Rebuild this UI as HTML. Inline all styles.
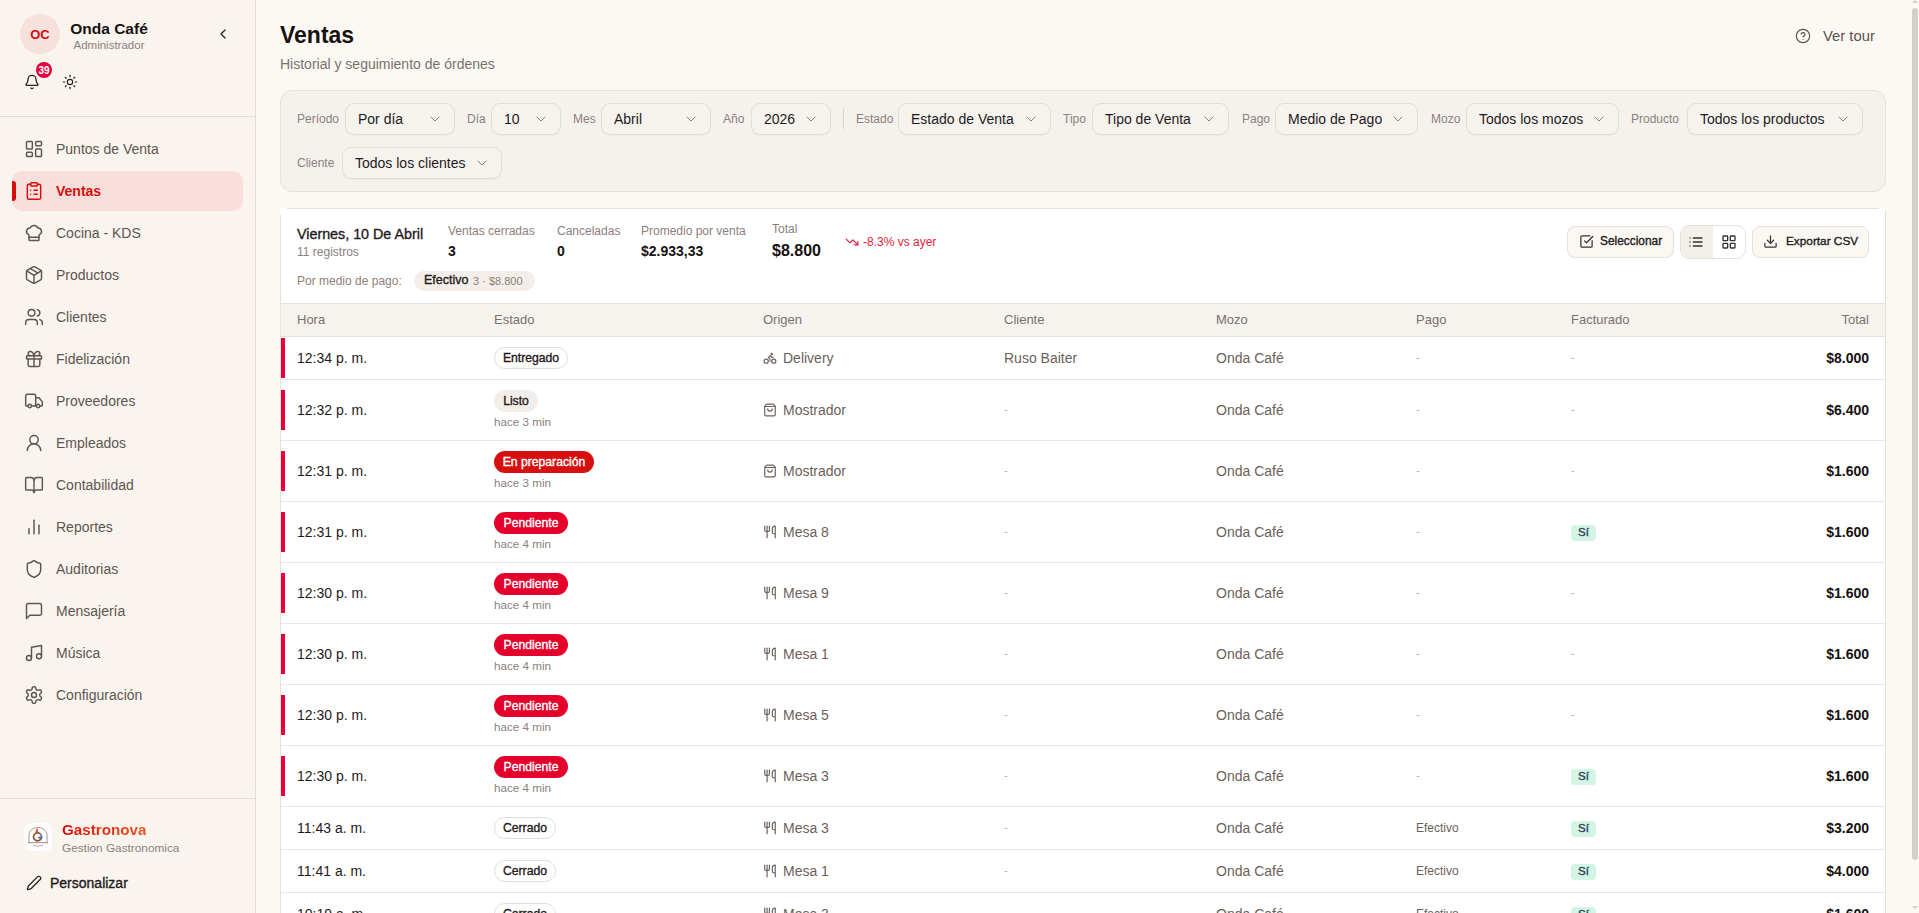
<!DOCTYPE html>
<html><head><meta charset="utf-8"><style>
html,body{margin:0;padding:0;width:1919px;height:913px;overflow:hidden;background:#fcf9f5;font-family:"Liberation Sans", sans-serif}
.t{position:absolute;white-space:nowrap;font-family:"Liberation Sans", sans-serif}
svg{display:block}
</style></head><body>
<div style="position:absolute;left:0px;top:0px;width:255px;height:913px;background:#f9f4ee"></div><div style="position:absolute;left:255px;top:0px;width:1px;height:913px;background:#e2ddd6"></div><div style="position:absolute;left:20px;top:14px;width:40px;height:40px;background:#f6e1dd;border-radius:50%"></div><div class="t" style="left:20px;top:28px;font-size:13px;line-height:13px;color:#d40b0b;font-weight:bold;width:40px;text-align:center">OC</div><div class="t" style="left:60px;top:21px;font-size:15.5px;line-height:15.5px;color:#17110f;font-weight:bold;width:98px;text-align:center">Onda Café</div><div class="t" style="left:60px;top:40px;font-size:11.5px;line-height:11.5px;color:#8b807b;font-weight:normal;width:98px;text-align:center">Administrador</div><svg style="position:absolute;left:215px;top:26px" width="16" height="16" viewBox="0 0 24 24" fill="none" stroke="#2a2224" stroke-width="2" stroke-linecap="round" stroke-linejoin="round"><path d="m15 18-6-6 6-6"/></svg><svg style="position:absolute;left:24px;top:74px" width="16" height="16" viewBox="0 0 24 24" fill="none" stroke="#2a2224" stroke-width="2" stroke-linecap="round" stroke-linejoin="round"><path d="M10.268 21a2 2 0 0 0 3.464 0"/><path d="M3.262 15.326A1 1 0 0 0 4 17h16a1 1 0 0 0 .74-1.673C19.41 13.956 18 12.499 18 8A6 6 0 0 0 6 8c0 4.499-1.411 5.956-2.738 7.326"/></svg><div style="position:absolute;left:36px;top:62px;width:16px;height:16px;background:#e8003d;border-radius:50%"></div><div class="t" style="left:36px;top:66px;font-size:10px;line-height:10px;color:#ffffff;font-weight:bold;width:16px;text-align:center">39</div><svg style="position:absolute;left:62px;top:74px" width="16" height="16" viewBox="0 0 24 24" fill="none" stroke="#2a2224" stroke-width="1.8" stroke-linecap="round" stroke-linejoin="round"><circle cx="12" cy="12" r="4"/><path d="M12 2v2"/><path d="M12 20v2"/><path d="m4.93 4.93 1.41 1.41"/><path d="m17.66 17.66 1.41 1.41"/><path d="M2 12h2"/><path d="M20 12h2"/><path d="m6.34 17.66-1.41 1.41"/><path d="m19.07 4.93-1.41 1.41"/></svg><div style="position:absolute;left:0px;top:116px;width:255px;height:1px;background:#e2ddd6"></div><svg style="position:absolute;left:24px;top:139px" width="20" height="20" viewBox="0 0 24 24" fill="none" stroke="#5f5450" stroke-width="1.75" stroke-linecap="round" stroke-linejoin="round"><rect width="7" height="9" x="3" y="3" rx="1"/><rect width="7" height="5" x="14" y="3" rx="1"/><rect width="7" height="9" x="14" y="12" rx="1"/><rect width="7" height="5" x="3" y="16" rx="1"/></svg><div class="t" style="left:56px;top:142px;font-size:14px;line-height:14px;color:#5f5450;font-weight:normal;">Puntos de Venta</div><div style="position:absolute;left:12px;top:171px;width:231px;height:40px;background:#f9dfdb;border-radius:10px"></div><div style="position:absolute;left:12px;top:181px;width:4px;height:20px;background:#d50d0d;border-radius:0 3px 3px 0"></div><svg style="position:absolute;left:24px;top:181px" width="20" height="20" viewBox="0 0 24 24" fill="none" stroke="#d50d0d" stroke-width="1.75" stroke-linecap="round" stroke-linejoin="round"><rect width="8" height="4" x="8" y="2" rx="1" ry="1"/><path d="M16 4h2a2 2 0 0 1 2 2v14a2 2 0 0 1-2 2H6a2 2 0 0 1-2-2V6a2 2 0 0 1 2-2h2"/><path d="M12 11h4"/><path d="M12 16h4"/><path d="M8 11h.01"/><path d="M8 16h.01"/></svg><div class="t" style="left:56px;top:184px;font-size:14px;line-height:14px;color:#d50d0d;font-weight:bold;">Ventas</div><svg style="position:absolute;left:24px;top:223px" width="20" height="20" viewBox="0 0 24 24" fill="none" stroke="#5f5450" stroke-width="1.75" stroke-linecap="round" stroke-linejoin="round"><path d="M17 21a1 1 0 0 0 1-1v-5.35c0-.457.316-.844.727-1.041a4 4 0 0 0-2.134-7.589 5 5 0 0 0-9.186 0 4 4 0 0 0-2.134 7.588c.411.198.727.585.727 1.041V20a1 1 0 0 0 1 1Z"/><path d="M6 17h12"/></svg><div class="t" style="left:56px;top:226px;font-size:14px;line-height:14px;color:#5f5450;font-weight:normal;">Cocina - KDS</div><svg style="position:absolute;left:24px;top:265px" width="20" height="20" viewBox="0 0 24 24" fill="none" stroke="#5f5450" stroke-width="1.75" stroke-linecap="round" stroke-linejoin="round"><path d="M11 21.73a2 2 0 0 0 2 0l7-4A2 2 0 0 0 21 16V8a2 2 0 0 0-1-1.73l-7-4a2 2 0 0 0-2 0l-7 4A2 2 0 0 0 3 8v8a2 2 0 0 0 1 1.73z"/><path d="M12 22V12"/><path d="m3.3 7 7.703 4.734a2 2 0 0 0 1.994 0L20.7 7"/><path d="m7.5 4.27 9 5.15"/></svg><div class="t" style="left:56px;top:268px;font-size:14px;line-height:14px;color:#5f5450;font-weight:normal;">Productos</div><svg style="position:absolute;left:24px;top:307px" width="20" height="20" viewBox="0 0 24 24" fill="none" stroke="#5f5450" stroke-width="1.75" stroke-linecap="round" stroke-linejoin="round"><path d="M16 21v-2a4 4 0 0 0-4-4H6a4 4 0 0 0-4 4v2"/><circle cx="9" cy="7" r="4"/><path d="M22 21v-2a4 4 0 0 0-3-3.87"/><path d="M16 3.13a4 4 0 0 1 0 7.75"/></svg><div class="t" style="left:56px;top:310px;font-size:14px;line-height:14px;color:#5f5450;font-weight:normal;">Clientes</div><svg style="position:absolute;left:24px;top:349px" width="20" height="20" viewBox="0 0 24 24" fill="none" stroke="#5f5450" stroke-width="1.75" stroke-linecap="round" stroke-linejoin="round"><rect x="3" y="8" width="18" height="4" rx="1"/><path d="M12 8v13"/><path d="M19 12v7a2 2 0 0 1-2 2H7a2 2 0 0 1-2-2v-7"/><path d="M7.5 8a2.5 2.5 0 0 1 0-5A4.8 8 0 0 1 12 8a4.8 8 0 0 1 4.5-5 2.5 2.5 0 0 1 0 5"/></svg><div class="t" style="left:56px;top:352px;font-size:14px;line-height:14px;color:#5f5450;font-weight:normal;">Fidelización</div><svg style="position:absolute;left:24px;top:391px" width="20" height="20" viewBox="0 0 24 24" fill="none" stroke="#5f5450" stroke-width="1.75" stroke-linecap="round" stroke-linejoin="round"><path d="M14 18V6a2 2 0 0 0-2-2H4a2 2 0 0 0-2 2v11a1 1 0 0 0 1 1h2"/><path d="M15 18H9"/><path d="M19 18h2a1 1 0 0 0 1-1v-3.65a1 1 0 0 0-.22-.624l-3.48-4.35A1 1 0 0 0 17.52 8H14"/><circle cx="17" cy="18" r="2"/><circle cx="7" cy="18" r="2"/></svg><div class="t" style="left:56px;top:394px;font-size:14px;line-height:14px;color:#5f5450;font-weight:normal;">Proveedores</div><svg style="position:absolute;left:24px;top:433px" width="20" height="20" viewBox="0 0 24 24" fill="none" stroke="#5f5450" stroke-width="1.75" stroke-linecap="round" stroke-linejoin="round"><circle cx="12" cy="8" r="5"/><path d="M20 21a8 8 0 0 0-16 0"/></svg><div class="t" style="left:56px;top:436px;font-size:14px;line-height:14px;color:#5f5450;font-weight:normal;">Empleados</div><svg style="position:absolute;left:24px;top:475px" width="20" height="20" viewBox="0 0 24 24" fill="none" stroke="#5f5450" stroke-width="1.75" stroke-linecap="round" stroke-linejoin="round"><path d="M12 7v14"/><path d="M3 18a1 1 0 0 1-1-1V4a1 1 0 0 1 1-1h5a4 4 0 0 1 4 4 4 4 0 0 1 4-4h5a1 1 0 0 1 1 1v13a1 1 0 0 1-1 1h-6a3 3 0 0 0-3 3 3 3 0 0 0-3-3z"/></svg><div class="t" style="left:56px;top:478px;font-size:14px;line-height:14px;color:#5f5450;font-weight:normal;">Contabilidad</div><svg style="position:absolute;left:24px;top:517px" width="20" height="20" viewBox="0 0 24 24" fill="none" stroke="#5f5450" stroke-width="1.75" stroke-linecap="round" stroke-linejoin="round"><line x1="18" x2="18" y1="20" y2="10"/><line x1="12" x2="12" y1="20" y2="4"/><line x1="6" x2="6" y1="20" y2="14"/></svg><div class="t" style="left:56px;top:520px;font-size:14px;line-height:14px;color:#5f5450;font-weight:normal;">Reportes</div><svg style="position:absolute;left:24px;top:559px" width="20" height="20" viewBox="0 0 24 24" fill="none" stroke="#5f5450" stroke-width="1.75" stroke-linecap="round" stroke-linejoin="round"><path d="M20 13c0 5-3.5 7.5-7.66 8.95a1 1 0 0 1-.67-.01C7.5 20.5 4 18 4 13V6a1 1 0 0 1 1-1c2 0 4.5-1.2 6.24-2.72a1.17 1.17 0 0 1 1.52 0C14.51 3.81 17 5 19 5a1 1 0 0 1 1 1z"/></svg><div class="t" style="left:56px;top:562px;font-size:14px;line-height:14px;color:#5f5450;font-weight:normal;">Auditorias</div><svg style="position:absolute;left:24px;top:601px" width="20" height="20" viewBox="0 0 24 24" fill="none" stroke="#5f5450" stroke-width="1.75" stroke-linecap="round" stroke-linejoin="round"><path d="M21 15a2 2 0 0 1-2 2H7l-4 4V5a2 2 0 0 1 2-2h14a2 2 0 0 1 2 2z"/></svg><div class="t" style="left:56px;top:604px;font-size:14px;line-height:14px;color:#5f5450;font-weight:normal;">Mensajería</div><svg style="position:absolute;left:24px;top:643px" width="20" height="20" viewBox="0 0 24 24" fill="none" stroke="#5f5450" stroke-width="1.75" stroke-linecap="round" stroke-linejoin="round"><path d="M9 18V5l12-2v13"/><circle cx="6" cy="18" r="3"/><circle cx="18" cy="16" r="3"/></svg><div class="t" style="left:56px;top:646px;font-size:14px;line-height:14px;color:#5f5450;font-weight:normal;">Música</div><svg style="position:absolute;left:24px;top:685px" width="20" height="20" viewBox="0 0 24 24" fill="none" stroke="#5f5450" stroke-width="1.75" stroke-linecap="round" stroke-linejoin="round"><path d="M12.22 2h-.44a2 2 0 0 0-2 2v.18a2 2 0 0 1-1 1.73l-.43.25a2 2 0 0 1-2 0l-.15-.08a2 2 0 0 0-2.73.73l-.22.38a2 2 0 0 0 .73 2.73l.15.1a2 2 0 0 1 1 1.72v.51a2 2 0 0 1-1 1.74l-.15.09a2 2 0 0 0-.73 2.73l.22.38a2 2 0 0 0 2.73.73l.15-.08a2 2 0 0 1 2 0l.43.25a2 2 0 0 1 1 1.73V20a2 2 0 0 0 2 2h.44a2 2 0 0 0 2-2v-.18a2 2 0 0 1 1-1.73l.43-.25a2 2 0 0 1 2 0l.15.08a2 2 0 0 0 2.73-.73l.22-.39a2 2 0 0 0-.73-2.73l-.15-.08a2 2 0 0 1-1-1.74v-.5a2 2 0 0 1 1-1.74l.15-.09a2 2 0 0 0 .73-2.73l-.22-.38a2 2 0 0 0-2.73-.73l-.15.08a2 2 0 0 1-2 0l-.43-.25a2 2 0 0 1-1-1.73V4a2 2 0 0 0-2-2z"/><circle cx="12" cy="12" r="3"/></svg><div class="t" style="left:56px;top:688px;font-size:14px;line-height:14px;color:#5f5450;font-weight:normal;">Configuración</div><div style="position:absolute;left:0px;top:798px;width:255px;height:1px;background:#e2ddd6"></div><div style="position:absolute;left:24px;top:823px;width:28px;height:28px;background:#fefdfc;border-radius:7px;box-shadow:0 0 1px rgba(255,255,255,0.8)"></div><svg style="position:absolute;left:24px;top:823px" width="28" height="28" viewBox="0 0 28 28"><path d="M5 20 V12 A9 7.5 0 0 1 23 12 V20" fill="none" stroke="#9a8e89" stroke-width="0.9"/><path d="M13.2 5 C11.5 7.5 11 9.5 12.2 11.2 C13.5 9.8 14.8 8.2 13.2 5 Z" fill="#e4472a"/><path d="M16.8 11.5 A4 4 0 1 0 17.5 14.5 H14.5" fill="none" stroke="#8f5534" stroke-width="1.7"/><path d="M16.8 11.5 A4 4 0 0 1 17.5 14.5 H14.5" fill="none" stroke="#3f79c4" stroke-width="1.7"/><path d="M4 19.6 H24" stroke="#948c98" stroke-width="1.1" stroke-dasharray="2.2 0.5"/><path d="M9 22.3 Q14 24 19 22.3" fill="none" stroke="#a39791" stroke-width="0.8"/></svg><div class="t" style="left:62px;top:822px;font-size:15.2px;line-height:15.2px;color:#e0180c;font-weight:bold;background:linear-gradient(90deg,#dd0a0a,#e8561e);-webkit-background-clip:text;background-clip:text;color:transparent">Gastronova</div><div class="t" style="left:62px;top:843px;font-size:11.8px;line-height:11.8px;color:#8b807b;font-weight:normal;">Gestion Gastronomica</div><svg style="position:absolute;left:26px;top:875px" width="16" height="16" viewBox="0 0 24 24" fill="none" stroke="#2a2224" stroke-width="2" stroke-linecap="round" stroke-linejoin="round"><path d="M21.174 6.812a1 1 0 0 0-3.986-3.987L3.842 16.174a2 2 0 0 0-.5.83l-1.321 4.352a.5.5 0 0 0 .623.622l4.353-1.32a2 2 0 0 0 .83-.497z"/></svg><div class="t" style="left:50px;top:876px;font-size:14px;line-height:14px;color:#231b1d;font-weight:normal;-webkit-text-stroke:0.35px #231b1d;">Personalizar</div><div style="position:absolute;left:256px;top:0px;width:1663px;height:913px;background:#fcf9f5"></div><div class="t" style="left:280px;top:24px;font-size:23px;line-height:23px;color:#17110f;font-weight:bold;">Ventas</div><div class="t" style="left:280px;top:57px;font-size:14px;line-height:14px;color:#7b706b;font-weight:normal;">Historial y seguimiento de órdenes</div><svg style="position:absolute;left:1795px;top:28px" width="16" height="16" viewBox="0 0 24 24" fill="none" stroke="#5d5150" stroke-width="1.75" stroke-linecap="round" stroke-linejoin="round"><circle cx="12" cy="12" r="10"/><path d="M9.09 9a3 3 0 0 1 5.83 1c0 2-3 3-3 3"/><path d="M12 17h.01"/></svg><div class="t" style="left:1823px;top:29px;font-size:14.8px;line-height:14.8px;color:#5d5150;font-weight:normal;">Ver tour</div><div style="position:absolute;left:280px;top:90px;width:1604px;height:100px;background:#f5f2ee;border:1px solid #e6e1db;border-radius:12px"></div><div class="t" style="left:297px;top:113px;font-size:12px;line-height:12px;color:#8b807b;font-weight:normal;">Período</div><div style="position:absolute;left:345px;top:103px;width:108px;height:30px;background:#f6f3ef;border:1px solid #e3ddd7;border-radius:9px;box-shadow:0 1px 1px rgba(0,0,0,0.03)"></div><div class="t" style="left:358px;top:112px;font-size:14px;line-height:14px;color:#1f1a1c;font-weight:normal;">Por día</div><svg style="position:absolute;left:427px;top:111px" width="16" height="16" viewBox="0 0 24 24" fill="none" stroke="#8b807b" stroke-width="1.5" stroke-linecap="round" stroke-linejoin="round"><path d="m6 9 6 6 6-6"/></svg><div class="t" style="left:467px;top:113px;font-size:12px;line-height:12px;color:#8b807b;font-weight:normal;">Día</div><div style="position:absolute;left:491px;top:103px;width:68px;height:30px;background:#f6f3ef;border:1px solid #e3ddd7;border-radius:9px;box-shadow:0 1px 1px rgba(0,0,0,0.03)"></div><div class="t" style="left:504px;top:112px;font-size:14px;line-height:14px;color:#1f1a1c;font-weight:normal;">10</div><svg style="position:absolute;left:533px;top:111px" width="16" height="16" viewBox="0 0 24 24" fill="none" stroke="#8b807b" stroke-width="1.5" stroke-linecap="round" stroke-linejoin="round"><path d="m6 9 6 6 6-6"/></svg><div class="t" style="left:573px;top:113px;font-size:12px;line-height:12px;color:#8b807b;font-weight:normal;">Mes</div><div style="position:absolute;left:601px;top:103px;width:108px;height:30px;background:#f6f3ef;border:1px solid #e3ddd7;border-radius:9px;box-shadow:0 1px 1px rgba(0,0,0,0.03)"></div><div class="t" style="left:614px;top:112px;font-size:14px;line-height:14px;color:#1f1a1c;font-weight:normal;">Abril</div><svg style="position:absolute;left:683px;top:111px" width="16" height="16" viewBox="0 0 24 24" fill="none" stroke="#8b807b" stroke-width="1.5" stroke-linecap="round" stroke-linejoin="round"><path d="m6 9 6 6 6-6"/></svg><div class="t" style="left:723px;top:113px;font-size:12px;line-height:12px;color:#8b807b;font-weight:normal;">Año</div><div style="position:absolute;left:751px;top:103px;width:78px;height:30px;background:#f6f3ef;border:1px solid #e3ddd7;border-radius:9px;box-shadow:0 1px 1px rgba(0,0,0,0.03)"></div><div class="t" style="left:764px;top:112px;font-size:14px;line-height:14px;color:#1f1a1c;font-weight:normal;">2026</div><svg style="position:absolute;left:803px;top:111px" width="16" height="16" viewBox="0 0 24 24" fill="none" stroke="#8b807b" stroke-width="1.5" stroke-linecap="round" stroke-linejoin="round"><path d="m6 9 6 6 6-6"/></svg><div style="position:absolute;left:843px;top:109px;width:1px;height:20px;background:#dcd5ce"></div><div class="t" style="left:856px;top:113px;font-size:12px;line-height:12px;color:#8b807b;font-weight:normal;">Estado</div><div style="position:absolute;left:898px;top:103px;width:151px;height:30px;background:#f6f3ef;border:1px solid #e3ddd7;border-radius:9px;box-shadow:0 1px 1px rgba(0,0,0,0.03)"></div><div class="t" style="left:911px;top:112px;font-size:14px;line-height:14px;color:#1f1a1c;font-weight:normal;">Estado de Venta</div><svg style="position:absolute;left:1023px;top:111px" width="16" height="16" viewBox="0 0 24 24" fill="none" stroke="#8b807b" stroke-width="1.5" stroke-linecap="round" stroke-linejoin="round"><path d="m6 9 6 6 6-6"/></svg><div class="t" style="left:1063px;top:113px;font-size:12px;line-height:12px;color:#8b807b;font-weight:normal;">Tipo</div><div style="position:absolute;left:1092px;top:103px;width:135px;height:30px;background:#f6f3ef;border:1px solid #e3ddd7;border-radius:9px;box-shadow:0 1px 1px rgba(0,0,0,0.03)"></div><div class="t" style="left:1105px;top:112px;font-size:14px;line-height:14px;color:#1f1a1c;font-weight:normal;">Tipo de Venta</div><svg style="position:absolute;left:1201px;top:111px" width="16" height="16" viewBox="0 0 24 24" fill="none" stroke="#8b807b" stroke-width="1.5" stroke-linecap="round" stroke-linejoin="round"><path d="m6 9 6 6 6-6"/></svg><div class="t" style="left:1242px;top:113px;font-size:12px;line-height:12px;color:#8b807b;font-weight:normal;">Pago</div><div style="position:absolute;left:1275px;top:103px;width:141px;height:30px;background:#f6f3ef;border:1px solid #e3ddd7;border-radius:9px;box-shadow:0 1px 1px rgba(0,0,0,0.03)"></div><div class="t" style="left:1288px;top:112px;font-size:14px;line-height:14px;color:#1f1a1c;font-weight:normal;">Medio de Pago</div><svg style="position:absolute;left:1390px;top:111px" width="16" height="16" viewBox="0 0 24 24" fill="none" stroke="#8b807b" stroke-width="1.5" stroke-linecap="round" stroke-linejoin="round"><path d="m6 9 6 6 6-6"/></svg><div class="t" style="left:1431px;top:113px;font-size:12px;line-height:12px;color:#8b807b;font-weight:normal;">Mozo</div><div style="position:absolute;left:1466px;top:103px;width:151px;height:30px;background:#f6f3ef;border:1px solid #e3ddd7;border-radius:9px;box-shadow:0 1px 1px rgba(0,0,0,0.03)"></div><div class="t" style="left:1479px;top:112px;font-size:14px;line-height:14px;color:#1f1a1c;font-weight:normal;">Todos los mozos</div><svg style="position:absolute;left:1591px;top:111px" width="16" height="16" viewBox="0 0 24 24" fill="none" stroke="#8b807b" stroke-width="1.5" stroke-linecap="round" stroke-linejoin="round"><path d="m6 9 6 6 6-6"/></svg><div class="t" style="left:1631px;top:113px;font-size:12px;line-height:12px;color:#8b807b;font-weight:normal;">Producto</div><div style="position:absolute;left:1687px;top:103px;width:174px;height:30px;background:#f6f3ef;border:1px solid #e3ddd7;border-radius:9px;box-shadow:0 1px 1px rgba(0,0,0,0.03)"></div><div class="t" style="left:1700px;top:112px;font-size:14px;line-height:14px;color:#1f1a1c;font-weight:normal;">Todos los productos</div><svg style="position:absolute;left:1835px;top:111px" width="16" height="16" viewBox="0 0 24 24" fill="none" stroke="#8b807b" stroke-width="1.5" stroke-linecap="round" stroke-linejoin="round"><path d="m6 9 6 6 6-6"/></svg><div class="t" style="left:297px;top:157px;font-size:12px;line-height:12px;color:#8b807b;font-weight:normal;">Cliente</div><div style="position:absolute;left:342px;top:147px;width:158px;height:30px;background:#f6f3ef;border:1px solid #e3ddd7;border-radius:9px;box-shadow:0 1px 1px rgba(0,0,0,0.03)"></div><div class="t" style="left:355px;top:156px;font-size:14px;line-height:14px;color:#1f1a1c;font-weight:normal;">Todos los clientes</div><svg style="position:absolute;left:474px;top:155px" width="16" height="16" viewBox="0 0 24 24" fill="none" stroke="#8b807b" stroke-width="1.5" stroke-linecap="round" stroke-linejoin="round"><path d="m6 9 6 6 6-6"/></svg><div style="position:absolute;left:280px;top:208px;width:1604px;height:720px;background:#ffffff;border:1px solid #e6e1db"></div><div style="position:absolute;left:280px;top:208px;width:7px;height:7px;background:#ffffff"></div><div style="position:absolute;left:1879px;top:208px;width:7px;height:2px;background:#ffffff"></div><div class="t" style="left:297px;top:227px;font-size:14.3px;line-height:14.3px;color:#1f1a1c;font-weight:normal;-webkit-text-stroke:0.35px #1f1a1c;">Viernes, 10 De Abril</div><div class="t" style="left:297px;top:246px;font-size:12px;line-height:12px;color:#8b807b;font-weight:normal;">11 registros</div><div class="t" style="left:448px;top:225px;font-size:12px;line-height:12px;color:#8b807b;font-weight:normal;">Ventas cerradas</div><div class="t" style="left:448px;top:244px;font-size:14px;line-height:14px;color:#17110f;font-weight:bold;">3</div><div class="t" style="left:557px;top:225px;font-size:12px;line-height:12px;color:#8b807b;font-weight:normal;">Canceladas</div><div class="t" style="left:557px;top:244px;font-size:14px;line-height:14px;color:#17110f;font-weight:bold;">0</div><div class="t" style="left:641px;top:225px;font-size:12px;line-height:12px;color:#8b807b;font-weight:normal;">Promedio por venta</div><div class="t" style="left:641px;top:244px;font-size:14px;line-height:14px;color:#17110f;font-weight:bold;">$2.933,33</div><div class="t" style="left:772px;top:223px;font-size:12px;line-height:12px;color:#8b807b;font-weight:normal;">Total</div><div class="t" style="left:772px;top:243px;font-size:16px;line-height:16px;color:#17110f;font-weight:bold;">$8.800</div><svg style="position:absolute;left:845px;top:235px" width="14" height="14" viewBox="0 0 24 24" fill="none" stroke="#e11d3c" stroke-width="2" stroke-linecap="round" stroke-linejoin="round"><polyline points="22 17 13.5 8.5 8.5 13.5 2 7"/><polyline points="16 17 22 17 22 11"/></svg><div class="t" style="left:863px;top:236px;font-size:12px;line-height:12px;color:#e11d3c;font-weight:normal;">-8.3% vs ayer</div><div class="t" style="left:297px;top:275px;font-size:12px;line-height:12px;color:#8b807b;font-weight:normal;">Por medio de pago:</div><div style="position:absolute;left:414px;top:271px;width:121px;height:20px;background:#f3eee9;border-radius:10px"></div><div class="t" style="left:424px;top:274px;font-size:12.5px;line-height:12.5px;color:#1f1a1c;font-weight:normal;-webkit-text-stroke:0.35px #1f1a1c;">Efectivo</div><div class="t" style="left:473px;top:276px;font-size:11px;line-height:11px;color:#8b807b;font-weight:normal;">3 · $8.800</div><div style="position:absolute;left:1567px;top:226px;width:105px;height:30px;background:#fbf8f4;border:1px solid #e6e0da;border-radius:8px"></div><svg style="position:absolute;left:1579px;top:234px" width="15" height="15" viewBox="0 0 24 24" fill="none" stroke="#3a3032" stroke-width="2" stroke-linecap="round" stroke-linejoin="round"><path d="M21 10.5V19a2 2 0 0 1-2 2H5a2 2 0 0 1-2-2V5a2 2 0 0 1 2-2h12.5"/><path d="m9 11 3 3L22 4"/></svg><div class="t" style="left:1600px;top:236px;font-size:11.9px;line-height:11.9px;color:#1f1a1c;font-weight:normal;-webkit-text-stroke:0.35px #1f1a1c;">Seleccionar</div><div style="position:absolute;left:1680px;top:225px;width:64px;height:32px;background:#ffffff;border:1px solid #e6e0da;border-radius:9px;overflow:hidden"></div><div style="position:absolute;left:1681px;top:226px;width:32px;height:32px;background:#f3efe9;border-radius:8px 0 0 8px"></div><svg style="position:absolute;left:1688px;top:234px" width="16" height="16" viewBox="0 0 24 24" fill="none" stroke="#3a3032" stroke-width="2" stroke-linecap="round" stroke-linejoin="round"><path d="M3 12h.01"/><path d="M3 18h.01"/><path d="M3 6h.01"/><path d="M8 12h13"/><path d="M8 18h13"/><path d="M8 6h13"/></svg><svg style="position:absolute;left:1721px;top:234px" width="16" height="16" viewBox="0 0 24 24" fill="none" stroke="#3a3032" stroke-width="2" stroke-linecap="round" stroke-linejoin="round"><rect width="7" height="7" x="3" y="3" rx="1"/><rect width="7" height="7" x="14" y="3" rx="1"/><rect width="7" height="7" x="14" y="14" rx="1"/><rect width="7" height="7" x="3" y="14" rx="1"/></svg><div style="position:absolute;left:1752px;top:226px;width:115px;height:30px;background:#fbf8f4;border:1px solid #e6e0da;border-radius:8px"></div><svg style="position:absolute;left:1763px;top:234px" width="15" height="15" viewBox="0 0 24 24" fill="none" stroke="#3a3032" stroke-width="2" stroke-linecap="round" stroke-linejoin="round"><path d="M21 15v4a2 2 0 0 1-2 2H5a2 2 0 0 1-2-2v-4"/><polyline points="7 10 12 15 17 10"/><line x1="12" x2="12" y1="15" y2="3"/></svg><div class="t" style="left:1786px;top:236px;font-size:11.8px;line-height:11.8px;color:#1f1a1c;font-weight:normal;-webkit-text-stroke:0.35px #1f1a1c;">Exportar CSV</div><div style="position:absolute;left:281px;top:303px;width:1604px;height:34px;background:#f6f3ef;border-top:1px solid #e6e1db;border-bottom:1px solid #e6e1db;box-sizing:border-box"></div><div class="t" style="left:297px;top:313px;font-size:13px;line-height:13px;color:#7b706b;font-weight:normal;">Hora</div><div class="t" style="left:494px;top:313px;font-size:13px;line-height:13px;color:#7b706b;font-weight:normal;">Estado</div><div class="t" style="left:763px;top:313px;font-size:13px;line-height:13px;color:#7b706b;font-weight:normal;">Origen</div><div class="t" style="left:1004px;top:313px;font-size:13px;line-height:13px;color:#7b706b;font-weight:normal;">Cliente</div><div class="t" style="left:1216px;top:313px;font-size:13px;line-height:13px;color:#7b706b;font-weight:normal;">Mozo</div><div class="t" style="left:1416px;top:313px;font-size:13px;line-height:13px;color:#7b706b;font-weight:normal;">Pago</div><div class="t" style="left:1571px;top:313px;font-size:13px;line-height:13px;color:#7b706b;font-weight:normal;">Facturado</div><div class="t" style="right:50px;top:313px;font-size:13px;line-height:13px;color:#7b706b;font-weight:normal;">Total</div><div style="position:absolute;left:281px;top:379px;width:1604px;height:1px;background:#ebe6e1"></div><div style="position:absolute;left:281px;top:338px;width:4px;height:40px;background:#e8003d"></div><div class="t" style="left:297px;top:351px;font-size:14px;line-height:14px;color:#1f1a1c;font-weight:normal;">12:34 p. m.</div><div style="position:absolute;left:494px;top:347px;width:74px;height:22px;box-sizing:border-box;border-radius:11px;background:#fff;border:1px solid #e3ddd7"></div><div class="t" style="left:494px;top:352px;font-size:12.2px;line-height:12.2px;color:#1f1a1c;font-weight:normal;-webkit-text-stroke:0.35px #1f1a1c;width:74px;text-align:center">Entregado</div><svg style="position:absolute;left:763px;top:351px" width="14" height="14" viewBox="0 0 24 24" fill="none" stroke="#6b5f5b" stroke-width="2" stroke-linecap="round" stroke-linejoin="round"><circle cx="18.5" cy="17.5" r="3.5"/><circle cx="5.5" cy="17.5" r="3.5"/><circle cx="15" cy="5" r="1"/><path d="M12 17.5V14l-3-3 4-3 2 3h2"/></svg><div class="t" style="left:783px;top:351px;font-size:14px;line-height:14px;color:#6b5f5b;font-weight:normal;">Delivery</div><div class="t" style="left:1004px;top:351px;font-size:14px;line-height:14px;color:#6b5f5b;font-weight:normal;">Ruso Baiter</div><div class="t" style="left:1216px;top:351px;font-size:14px;line-height:14px;color:#6b5f5b;font-weight:normal;">Onda Café</div><div class="t" style="left:1416px;top:352px;font-size:11px;line-height:11px;color:#b9afa9;font-weight:normal;">-</div><div class="t" style="left:1571px;top:352px;font-size:11px;line-height:11px;color:#b9afa9;font-weight:normal;">-</div><div class="t" style="right:50px;top:351px;font-size:14px;line-height:14px;color:#17110f;font-weight:bold;">$8.000</div><div style="position:absolute;left:281px;top:440px;width:1604px;height:1px;background:#ebe6e1"></div><div style="position:absolute;left:281px;top:390px;width:4px;height:40px;background:#e8003d"></div><div class="t" style="left:297px;top:403px;font-size:14px;line-height:14px;color:#1f1a1c;font-weight:normal;">12:32 p. m.</div><div style="position:absolute;left:494px;top:390px;width:44px;height:22px;box-sizing:border-box;border-radius:11px;background:#f3eee9"></div><div class="t" style="left:494px;top:395px;font-size:12.2px;line-height:12.2px;color:#1f1a1c;font-weight:normal;-webkit-text-stroke:0.35px #1f1a1c;width:44px;text-align:center">Listo</div><div class="t" style="left:494px;top:416px;font-size:11.65px;line-height:11.65px;color:#8b807b;font-weight:normal;">hace 3 min</div><svg style="position:absolute;left:763px;top:403px" width="14" height="14" viewBox="0 0 24 24" fill="none" stroke="#6b5f5b" stroke-width="2" stroke-linecap="round" stroke-linejoin="round"><path d="M16 10a4 4 0 0 1-8 0"/><path d="M3.103 6.034h17.794"/><path d="M3.4 5.467a2 2 0 0 0-.4 1.2V20a2 2 0 0 0 2 2h14a2 2 0 0 0 2-2V6.667a2 2 0 0 0-.4-1.2l-2-2.667A2 2 0 0 0 17 2H7a2 2 0 0 0-1.6.8z"/></svg><div class="t" style="left:783px;top:403px;font-size:14px;line-height:14px;color:#6b5f5b;font-weight:normal;">Mostrador</div><div class="t" style="left:1004px;top:404px;font-size:11px;line-height:11px;color:#b9afa9;font-weight:normal;">-</div><div class="t" style="left:1216px;top:403px;font-size:14px;line-height:14px;color:#6b5f5b;font-weight:normal;">Onda Café</div><div class="t" style="left:1416px;top:404px;font-size:11px;line-height:11px;color:#b9afa9;font-weight:normal;">-</div><div class="t" style="left:1571px;top:404px;font-size:11px;line-height:11px;color:#b9afa9;font-weight:normal;">-</div><div class="t" style="right:50px;top:403px;font-size:14px;line-height:14px;color:#17110f;font-weight:bold;">$6.400</div><div style="position:absolute;left:281px;top:501px;width:1604px;height:1px;background:#ebe6e1"></div><div style="position:absolute;left:281px;top:451px;width:4px;height:40px;background:#e8003d"></div><div class="t" style="left:297px;top:464px;font-size:14px;line-height:14px;color:#1f1a1c;font-weight:normal;">12:31 p. m.</div><div style="position:absolute;left:494px;top:451px;width:100px;height:22px;box-sizing:border-box;border-radius:11px;background:#d70f0f"></div><div class="t" style="left:494px;top:456px;font-size:12.2px;line-height:12.2px;color:#ffffff;font-weight:normal;-webkit-text-stroke:0.35px #ffffff;width:100px;text-align:center">En preparación</div><div class="t" style="left:494px;top:477px;font-size:11.65px;line-height:11.65px;color:#8b807b;font-weight:normal;">hace 3 min</div><svg style="position:absolute;left:763px;top:464px" width="14" height="14" viewBox="0 0 24 24" fill="none" stroke="#6b5f5b" stroke-width="2" stroke-linecap="round" stroke-linejoin="round"><path d="M16 10a4 4 0 0 1-8 0"/><path d="M3.103 6.034h17.794"/><path d="M3.4 5.467a2 2 0 0 0-.4 1.2V20a2 2 0 0 0 2 2h14a2 2 0 0 0 2-2V6.667a2 2 0 0 0-.4-1.2l-2-2.667A2 2 0 0 0 17 2H7a2 2 0 0 0-1.6.8z"/></svg><div class="t" style="left:783px;top:464px;font-size:14px;line-height:14px;color:#6b5f5b;font-weight:normal;">Mostrador</div><div class="t" style="left:1004px;top:465px;font-size:11px;line-height:11px;color:#b9afa9;font-weight:normal;">-</div><div class="t" style="left:1216px;top:464px;font-size:14px;line-height:14px;color:#6b5f5b;font-weight:normal;">Onda Café</div><div class="t" style="left:1416px;top:465px;font-size:11px;line-height:11px;color:#b9afa9;font-weight:normal;">-</div><div class="t" style="left:1571px;top:465px;font-size:11px;line-height:11px;color:#b9afa9;font-weight:normal;">-</div><div class="t" style="right:50px;top:464px;font-size:14px;line-height:14px;color:#17110f;font-weight:bold;">$1.600</div><div style="position:absolute;left:281px;top:562px;width:1604px;height:1px;background:#ebe6e1"></div><div style="position:absolute;left:281px;top:512px;width:4px;height:40px;background:#e8003d"></div><div class="t" style="left:297px;top:525px;font-size:14px;line-height:14px;color:#1f1a1c;font-weight:normal;">12:31 p. m.</div><div style="position:absolute;left:494px;top:512px;width:74px;height:22px;box-sizing:border-box;border-radius:11px;background:#e4002b"></div><div class="t" style="left:494px;top:517px;font-size:12.2px;line-height:12.2px;color:#ffffff;font-weight:normal;-webkit-text-stroke:0.35px #ffffff;width:74px;text-align:center">Pendiente</div><div class="t" style="left:494px;top:538px;font-size:11.65px;line-height:11.65px;color:#8b807b;font-weight:normal;">hace 4 min</div><svg style="position:absolute;left:763px;top:525px" width="14" height="14" viewBox="0 0 24 24" fill="none" stroke="#6b5f5b" stroke-width="2" stroke-linecap="round" stroke-linejoin="round"><path d="M3 2v7c0 1.1.9 2 2 2h4a2 2 0 0 0 2-2V2"/><path d="M7 2v20"/><path d="M21 15V2a5 5 0 0 0-5 5v6c0 1.1.9 2 2 2h3Zm0 0v7"/></svg><div class="t" style="left:783px;top:525px;font-size:14px;line-height:14px;color:#6b5f5b;font-weight:normal;">Mesa 8</div><div class="t" style="left:1004px;top:526px;font-size:11px;line-height:11px;color:#b9afa9;font-weight:normal;">-</div><div class="t" style="left:1216px;top:525px;font-size:14px;line-height:14px;color:#6b5f5b;font-weight:normal;">Onda Café</div><div class="t" style="left:1416px;top:526px;font-size:11px;line-height:11px;color:#b9afa9;font-weight:normal;">-</div><div style="position:absolute;left:1571px;top:525px;width:25px;height:16px;background:#d3f5e3;border-radius:4px"></div><div class="t" style="left:1571px;top:527px;font-size:11.5px;line-height:11.5px;color:#2a3f58;font-weight:normal;-webkit-text-stroke:0.35px #2a3f58;width:25px;text-align:center">Sí</div><div class="t" style="right:50px;top:525px;font-size:14px;line-height:14px;color:#17110f;font-weight:bold;">$1.600</div><div style="position:absolute;left:281px;top:623px;width:1604px;height:1px;background:#ebe6e1"></div><div style="position:absolute;left:281px;top:573px;width:4px;height:40px;background:#e8003d"></div><div class="t" style="left:297px;top:586px;font-size:14px;line-height:14px;color:#1f1a1c;font-weight:normal;">12:30 p. m.</div><div style="position:absolute;left:494px;top:573px;width:74px;height:22px;box-sizing:border-box;border-radius:11px;background:#e4002b"></div><div class="t" style="left:494px;top:578px;font-size:12.2px;line-height:12.2px;color:#ffffff;font-weight:normal;-webkit-text-stroke:0.35px #ffffff;width:74px;text-align:center">Pendiente</div><div class="t" style="left:494px;top:599px;font-size:11.65px;line-height:11.65px;color:#8b807b;font-weight:normal;">hace 4 min</div><svg style="position:absolute;left:763px;top:586px" width="14" height="14" viewBox="0 0 24 24" fill="none" stroke="#6b5f5b" stroke-width="2" stroke-linecap="round" stroke-linejoin="round"><path d="M3 2v7c0 1.1.9 2 2 2h4a2 2 0 0 0 2-2V2"/><path d="M7 2v20"/><path d="M21 15V2a5 5 0 0 0-5 5v6c0 1.1.9 2 2 2h3Zm0 0v7"/></svg><div class="t" style="left:783px;top:586px;font-size:14px;line-height:14px;color:#6b5f5b;font-weight:normal;">Mesa 9</div><div class="t" style="left:1004px;top:587px;font-size:11px;line-height:11px;color:#b9afa9;font-weight:normal;">-</div><div class="t" style="left:1216px;top:586px;font-size:14px;line-height:14px;color:#6b5f5b;font-weight:normal;">Onda Café</div><div class="t" style="left:1416px;top:587px;font-size:11px;line-height:11px;color:#b9afa9;font-weight:normal;">-</div><div class="t" style="left:1571px;top:587px;font-size:11px;line-height:11px;color:#b9afa9;font-weight:normal;">-</div><div class="t" style="right:50px;top:586px;font-size:14px;line-height:14px;color:#17110f;font-weight:bold;">$1.600</div><div style="position:absolute;left:281px;top:684px;width:1604px;height:1px;background:#ebe6e1"></div><div style="position:absolute;left:281px;top:634px;width:4px;height:40px;background:#e8003d"></div><div class="t" style="left:297px;top:647px;font-size:14px;line-height:14px;color:#1f1a1c;font-weight:normal;">12:30 p. m.</div><div style="position:absolute;left:494px;top:634px;width:74px;height:22px;box-sizing:border-box;border-radius:11px;background:#e4002b"></div><div class="t" style="left:494px;top:639px;font-size:12.2px;line-height:12.2px;color:#ffffff;font-weight:normal;-webkit-text-stroke:0.35px #ffffff;width:74px;text-align:center">Pendiente</div><div class="t" style="left:494px;top:660px;font-size:11.65px;line-height:11.65px;color:#8b807b;font-weight:normal;">hace 4 min</div><svg style="position:absolute;left:763px;top:647px" width="14" height="14" viewBox="0 0 24 24" fill="none" stroke="#6b5f5b" stroke-width="2" stroke-linecap="round" stroke-linejoin="round"><path d="M3 2v7c0 1.1.9 2 2 2h4a2 2 0 0 0 2-2V2"/><path d="M7 2v20"/><path d="M21 15V2a5 5 0 0 0-5 5v6c0 1.1.9 2 2 2h3Zm0 0v7"/></svg><div class="t" style="left:783px;top:647px;font-size:14px;line-height:14px;color:#6b5f5b;font-weight:normal;">Mesa 1</div><div class="t" style="left:1004px;top:648px;font-size:11px;line-height:11px;color:#b9afa9;font-weight:normal;">-</div><div class="t" style="left:1216px;top:647px;font-size:14px;line-height:14px;color:#6b5f5b;font-weight:normal;">Onda Café</div><div class="t" style="left:1416px;top:648px;font-size:11px;line-height:11px;color:#b9afa9;font-weight:normal;">-</div><div class="t" style="left:1571px;top:648px;font-size:11px;line-height:11px;color:#b9afa9;font-weight:normal;">-</div><div class="t" style="right:50px;top:647px;font-size:14px;line-height:14px;color:#17110f;font-weight:bold;">$1.600</div><div style="position:absolute;left:281px;top:745px;width:1604px;height:1px;background:#ebe6e1"></div><div style="position:absolute;left:281px;top:695px;width:4px;height:40px;background:#e8003d"></div><div class="t" style="left:297px;top:708px;font-size:14px;line-height:14px;color:#1f1a1c;font-weight:normal;">12:30 p. m.</div><div style="position:absolute;left:494px;top:695px;width:74px;height:22px;box-sizing:border-box;border-radius:11px;background:#e4002b"></div><div class="t" style="left:494px;top:700px;font-size:12.2px;line-height:12.2px;color:#ffffff;font-weight:normal;-webkit-text-stroke:0.35px #ffffff;width:74px;text-align:center">Pendiente</div><div class="t" style="left:494px;top:721px;font-size:11.65px;line-height:11.65px;color:#8b807b;font-weight:normal;">hace 4 min</div><svg style="position:absolute;left:763px;top:708px" width="14" height="14" viewBox="0 0 24 24" fill="none" stroke="#6b5f5b" stroke-width="2" stroke-linecap="round" stroke-linejoin="round"><path d="M3 2v7c0 1.1.9 2 2 2h4a2 2 0 0 0 2-2V2"/><path d="M7 2v20"/><path d="M21 15V2a5 5 0 0 0-5 5v6c0 1.1.9 2 2 2h3Zm0 0v7"/></svg><div class="t" style="left:783px;top:708px;font-size:14px;line-height:14px;color:#6b5f5b;font-weight:normal;">Mesa 5</div><div class="t" style="left:1004px;top:709px;font-size:11px;line-height:11px;color:#b9afa9;font-weight:normal;">-</div><div class="t" style="left:1216px;top:708px;font-size:14px;line-height:14px;color:#6b5f5b;font-weight:normal;">Onda Café</div><div class="t" style="left:1416px;top:709px;font-size:11px;line-height:11px;color:#b9afa9;font-weight:normal;">-</div><div class="t" style="left:1571px;top:709px;font-size:11px;line-height:11px;color:#b9afa9;font-weight:normal;">-</div><div class="t" style="right:50px;top:708px;font-size:14px;line-height:14px;color:#17110f;font-weight:bold;">$1.600</div><div style="position:absolute;left:281px;top:806px;width:1604px;height:1px;background:#ebe6e1"></div><div style="position:absolute;left:281px;top:756px;width:4px;height:40px;background:#e8003d"></div><div class="t" style="left:297px;top:769px;font-size:14px;line-height:14px;color:#1f1a1c;font-weight:normal;">12:30 p. m.</div><div style="position:absolute;left:494px;top:756px;width:74px;height:22px;box-sizing:border-box;border-radius:11px;background:#e4002b"></div><div class="t" style="left:494px;top:761px;font-size:12.2px;line-height:12.2px;color:#ffffff;font-weight:normal;-webkit-text-stroke:0.35px #ffffff;width:74px;text-align:center">Pendiente</div><div class="t" style="left:494px;top:782px;font-size:11.65px;line-height:11.65px;color:#8b807b;font-weight:normal;">hace 4 min</div><svg style="position:absolute;left:763px;top:769px" width="14" height="14" viewBox="0 0 24 24" fill="none" stroke="#6b5f5b" stroke-width="2" stroke-linecap="round" stroke-linejoin="round"><path d="M3 2v7c0 1.1.9 2 2 2h4a2 2 0 0 0 2-2V2"/><path d="M7 2v20"/><path d="M21 15V2a5 5 0 0 0-5 5v6c0 1.1.9 2 2 2h3Zm0 0v7"/></svg><div class="t" style="left:783px;top:769px;font-size:14px;line-height:14px;color:#6b5f5b;font-weight:normal;">Mesa 3</div><div class="t" style="left:1004px;top:770px;font-size:11px;line-height:11px;color:#b9afa9;font-weight:normal;">-</div><div class="t" style="left:1216px;top:769px;font-size:14px;line-height:14px;color:#6b5f5b;font-weight:normal;">Onda Café</div><div class="t" style="left:1416px;top:770px;font-size:11px;line-height:11px;color:#b9afa9;font-weight:normal;">-</div><div style="position:absolute;left:1571px;top:769px;width:25px;height:16px;background:#d3f5e3;border-radius:4px"></div><div class="t" style="left:1571px;top:771px;font-size:11.5px;line-height:11.5px;color:#2a3f58;font-weight:normal;-webkit-text-stroke:0.35px #2a3f58;width:25px;text-align:center">Sí</div><div class="t" style="right:50px;top:769px;font-size:14px;line-height:14px;color:#17110f;font-weight:bold;">$1.600</div><div style="position:absolute;left:281px;top:849px;width:1604px;height:1px;background:#ebe6e1"></div><div class="t" style="left:297px;top:821px;font-size:14px;line-height:14px;color:#1f1a1c;font-weight:normal;">11:43 a. m.</div><div style="position:absolute;left:494px;top:817px;width:62px;height:22px;box-sizing:border-box;border-radius:11px;background:#fff;border:1px solid #e3ddd7"></div><div class="t" style="left:494px;top:822px;font-size:12.2px;line-height:12.2px;color:#1f1a1c;font-weight:normal;-webkit-text-stroke:0.35px #1f1a1c;width:62px;text-align:center">Cerrado</div><svg style="position:absolute;left:763px;top:821px" width="14" height="14" viewBox="0 0 24 24" fill="none" stroke="#6b5f5b" stroke-width="2" stroke-linecap="round" stroke-linejoin="round"><path d="M3 2v7c0 1.1.9 2 2 2h4a2 2 0 0 0 2-2V2"/><path d="M7 2v20"/><path d="M21 15V2a5 5 0 0 0-5 5v6c0 1.1.9 2 2 2h3Zm0 0v7"/></svg><div class="t" style="left:783px;top:821px;font-size:14px;line-height:14px;color:#6b5f5b;font-weight:normal;">Mesa 3</div><div class="t" style="left:1004px;top:822px;font-size:11px;line-height:11px;color:#b9afa9;font-weight:normal;">-</div><div class="t" style="left:1216px;top:821px;font-size:14px;line-height:14px;color:#6b5f5b;font-weight:normal;">Onda Café</div><div class="t" style="left:1416px;top:822px;font-size:12px;line-height:12px;color:#6b5f5b;font-weight:normal;">Efectivo</div><div style="position:absolute;left:1571px;top:821px;width:25px;height:16px;background:#d3f5e3;border-radius:4px"></div><div class="t" style="left:1571px;top:823px;font-size:11.5px;line-height:11.5px;color:#2a3f58;font-weight:normal;-webkit-text-stroke:0.35px #2a3f58;width:25px;text-align:center">Sí</div><div class="t" style="right:50px;top:821px;font-size:14px;line-height:14px;color:#17110f;font-weight:bold;">$3.200</div><div style="position:absolute;left:281px;top:892px;width:1604px;height:1px;background:#ebe6e1"></div><div class="t" style="left:297px;top:864px;font-size:14px;line-height:14px;color:#1f1a1c;font-weight:normal;">11:41 a. m.</div><div style="position:absolute;left:494px;top:860px;width:62px;height:22px;box-sizing:border-box;border-radius:11px;background:#fff;border:1px solid #e3ddd7"></div><div class="t" style="left:494px;top:865px;font-size:12.2px;line-height:12.2px;color:#1f1a1c;font-weight:normal;-webkit-text-stroke:0.35px #1f1a1c;width:62px;text-align:center">Cerrado</div><svg style="position:absolute;left:763px;top:864px" width="14" height="14" viewBox="0 0 24 24" fill="none" stroke="#6b5f5b" stroke-width="2" stroke-linecap="round" stroke-linejoin="round"><path d="M3 2v7c0 1.1.9 2 2 2h4a2 2 0 0 0 2-2V2"/><path d="M7 2v20"/><path d="M21 15V2a5 5 0 0 0-5 5v6c0 1.1.9 2 2 2h3Zm0 0v7"/></svg><div class="t" style="left:783px;top:864px;font-size:14px;line-height:14px;color:#6b5f5b;font-weight:normal;">Mesa 1</div><div class="t" style="left:1004px;top:865px;font-size:11px;line-height:11px;color:#b9afa9;font-weight:normal;">-</div><div class="t" style="left:1216px;top:864px;font-size:14px;line-height:14px;color:#6b5f5b;font-weight:normal;">Onda Café</div><div class="t" style="left:1416px;top:865px;font-size:12px;line-height:12px;color:#6b5f5b;font-weight:normal;">Efectivo</div><div style="position:absolute;left:1571px;top:864px;width:25px;height:16px;background:#d3f5e3;border-radius:4px"></div><div class="t" style="left:1571px;top:866px;font-size:11.5px;line-height:11.5px;color:#2a3f58;font-weight:normal;-webkit-text-stroke:0.35px #2a3f58;width:25px;text-align:center">Sí</div><div class="t" style="right:50px;top:864px;font-size:14px;line-height:14px;color:#17110f;font-weight:bold;">$4.000</div><div style="position:absolute;left:281px;top:935px;width:1604px;height:1px;background:#ebe6e1"></div><div class="t" style="left:297px;top:907px;font-size:14px;line-height:14px;color:#1f1a1c;font-weight:normal;">10:19 a. m.</div><div style="position:absolute;left:494px;top:903px;width:62px;height:22px;box-sizing:border-box;border-radius:11px;background:#fff;border:1px solid #e3ddd7"></div><div class="t" style="left:494px;top:908px;font-size:12.2px;line-height:12.2px;color:#1f1a1c;font-weight:normal;-webkit-text-stroke:0.35px #1f1a1c;width:62px;text-align:center">Cerrado</div><svg style="position:absolute;left:763px;top:907px" width="14" height="14" viewBox="0 0 24 24" fill="none" stroke="#6b5f5b" stroke-width="2" stroke-linecap="round" stroke-linejoin="round"><path d="M3 2v7c0 1.1.9 2 2 2h4a2 2 0 0 0 2-2V2"/><path d="M7 2v20"/><path d="M21 15V2a5 5 0 0 0-5 5v6c0 1.1.9 2 2 2h3Zm0 0v7"/></svg><div class="t" style="left:783px;top:907px;font-size:14px;line-height:14px;color:#6b5f5b;font-weight:normal;">Mesa 3</div><div class="t" style="left:1004px;top:908px;font-size:11px;line-height:11px;color:#b9afa9;font-weight:normal;">-</div><div class="t" style="left:1216px;top:907px;font-size:14px;line-height:14px;color:#6b5f5b;font-weight:normal;">Onda Café</div><div class="t" style="left:1416px;top:908px;font-size:12px;line-height:12px;color:#6b5f5b;font-weight:normal;">Efectivo</div><div style="position:absolute;left:1571px;top:907px;width:25px;height:16px;background:#d3f5e3;border-radius:4px"></div><div class="t" style="left:1571px;top:909px;font-size:11.5px;line-height:11.5px;color:#2a3f58;font-weight:normal;-webkit-text-stroke:0.35px #2a3f58;width:25px;text-align:center">Sí</div><div class="t" style="right:50px;top:907px;font-size:14px;line-height:14px;color:#17110f;font-weight:bold;">$1.600</div><div style="position:absolute;left:1912px;top:0px;width:7px;height:913px;background:#fcf9f5"></div><div style="position:absolute;left:1912px;top:8px;width:6px;height:852px;background:#d3d0cc;border-radius:3px"></div><svg style="position:absolute;left:1912px;top:0px" width="6" height="4"><path d="M0 3 L3 0 L6 3 Z" fill="#cfcbc7"/></svg><svg style="position:absolute;left:1912px;top:906px" width="6" height="4"><path d="M0 0 L3 3 L6 0 Z" fill="#cfcbc7"/></svg>
</body></html>
